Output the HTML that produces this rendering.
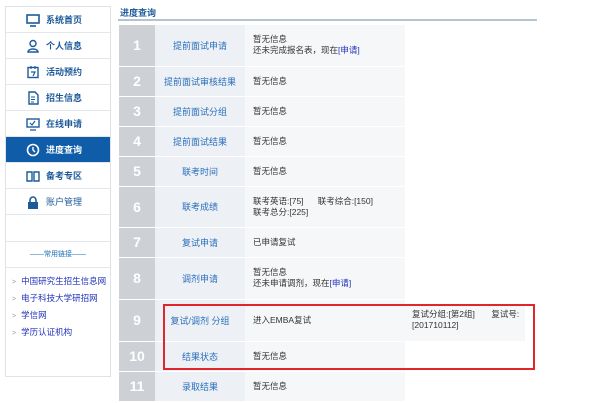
<!DOCTYPE html>
<html><head><meta charset="utf-8"><style>
*{margin:0;padding:0;box-sizing:border-box}
body{width:600px;height:403px;background:#fff;font-family:"Liberation Sans","Noto Sans CJK SC",sans-serif;font-size:9px;color:#333;position:relative;overflow:hidden}
.side{position:absolute;left:5px;top:6px;width:106px;height:371px;border:1px solid #dfe3e8;background:#fff}
.it{height:26px;border-bottom:1px solid #e3e6ea;display:flex;align-items:center;padding-left:20px;color:#1d5a9a;font-weight:bold;font-size:9px}
.it svg{width:14px;height:14px;margin-right:6px;flex:none}
.it.act{background:#0f5ca8;color:#fff}
.blank{height:27px;border-bottom:1px solid #e3e6ea}
.hd{height:26px;border-bottom:1px solid #e3e6ea;color:#1a6fb5;font-size:7px;text-align:center;line-height:26px}
.links{padding-top:5px}
.links div{height:17px;line-height:17px;font-size:8.5px;color:#2233bb;padding-left:6px}
.links span{color:#999;margin-right:5px;font-size:7px}
.title{position:absolute;left:120px;top:6px;font-size:9px;font-weight:bold;color:#1d5a9a}
.line{position:absolute;left:118px;top:19px;width:419px;height:2px;background:#b5c3d1}
table{position:absolute;left:119px;top:25px;border-collapse:collapse}
td{border-bottom:1px solid #fff;padding:0;vertical-align:middle}
td.n{width:36px;background:#cdd1d6;color:#fff;font-weight:bold;font-size:14px;text-align:center}
td.l{width:90px;background:#edf1f6;color:#2a6ebb;text-align:center;font-size:9px}
td.c{width:160px;background:#f6f7f9;padding-left:8px;font-size:8.5px;line-height:11px}
a{color:#2233bb;text-decoration:none}
.red{position:absolute;left:163px;top:304px;width:372px;height:66px;border:2px solid #e0262c}
.ext{position:absolute;left:405px;top:305px;width:120px;height:36px;background:#f6f7f9;font-size:8.5px;line-height:11px;padding:4px 0 0 7px}
</style></head><body>
<div class="side">
<div class="it"><svg viewBox="0 0 14 14"><rect x="1" y="2" width="12" height="8" fill="none" stroke="#1d5a9a" stroke-width="1.6"/><path d="M4 13h6" stroke="#1d5a9a" stroke-width="1.6"/></svg>系统首页</div>
<div class="it"><svg viewBox="0 0 14 14"><circle cx="7" cy="4.5" r="3" fill="none" stroke="#1d5a9a" stroke-width="1.4"/><path d="M2 13c0-4 10-4 10 0z" fill="none" stroke="#1d5a9a" stroke-width="1.4"/></svg>个人信息</div>
<div class="it"><svg viewBox="0 0 14 14"><rect x="2" y="2.5" width="10" height="10" fill="none" stroke="#1d5a9a" stroke-width="1.4"/><path d="M5 1v3M9 1v3M5 7h4l-2 4" stroke="#1d5a9a" stroke-width="1.2" fill="none"/></svg>活动预约</div>
<div class="it"><svg viewBox="0 0 14 14"><path d="M3 1h6l3 3v9H3z" fill="none" stroke="#1d5a9a" stroke-width="1.4"/><path d="M5 6h4M5 8.5h4M5 11h3" stroke="#1d5a9a" stroke-width="1"/></svg>招生信息</div>
<div class="it"><svg viewBox="0 0 14 14"><rect x="1" y="2" width="12" height="8" fill="none" stroke="#1d5a9a" stroke-width="1.4"/><path d="M4 6l2 2 3-4M4 13h6" stroke="#1d5a9a" stroke-width="1.2" fill="none"/></svg>在线申请</div>
<div class="it act"><svg viewBox="0 0 14 14"><circle cx="7" cy="7" r="5.5" fill="none" stroke="#fff" stroke-width="1.6"/><path d="M7 4v3l2 2" stroke="#fff" stroke-width="1.4" fill="none"/></svg>进度查询</div>
<div class="it"><svg viewBox="0 0 14 14"><path d="M1 3h5v9H1zM8 3h5v9H8z" fill="none" stroke="#1d5a9a" stroke-width="1.4"/></svg>备考专区</div>
<div class="it" style="font-weight:normal"><svg viewBox="0 0 14 14"><path d="M4 7V5a3 3 0 016 0v2" fill="none" stroke="#1d5a9a" stroke-width="1.6"/><rect x="2" y="7" width="10" height="7" fill="#1d5a9a"/></svg>账户管理</div>
<div class="blank"></div>
<div class="hd">——常用链接——</div>
<div class="links">
<div><span>&gt;</span>中国研究生招生信息网</div>
<div><span>&gt;</span>电子科技大学研招网</div>
<div><span>&gt;</span>学信网</div>
<div><span>&gt;</span>学历认证机构</div>
</div>
</div>
<div class="title">进度查询</div>
<div class="line"></div>
<table>
<tr style="height:41px"><td class="n">1</td><td class="l">提前面试申请</td><td class="c">暂无信息<br>还未完成报名表，现在<a>[申请]</a></td></tr>
<tr style="height:30px"><td class="n">2</td><td class="l">提前面试审核结果</td><td class="c">暂无信息</td></tr>
<tr style="height:30px"><td class="n">3</td><td class="l">提前面试分组</td><td class="c">暂无信息</td></tr>
<tr style="height:30px"><td class="n">4</td><td class="l">提前面试结果</td><td class="c">暂无信息</td></tr>
<tr style="height:30px"><td class="n">5</td><td class="l">联考时间</td><td class="c">暂无信息</td></tr>
<tr style="height:41px"><td class="n">6</td><td class="l">联考成绩</td><td class="c">联考英语:[75]&nbsp;&nbsp;&nbsp;&nbsp;&nbsp;&nbsp;联考综合:[150]<br>联考总分:[225]</td></tr>
<tr style="height:30px"><td class="n">7</td><td class="l">复试申请</td><td class="c">已申请复试</td></tr>
<tr style="height:42px"><td class="n">8</td><td class="l">调剂申请</td><td class="c">暂无信息<br>还未申请调剂，现在<a>[申请]</a></td></tr>
<tr style="height:42px"><td class="n">9</td><td class="l">复试/调剂 分组</td><td class="c">进入EMBA复试</td></tr>
<tr style="height:30px"><td class="n">10</td><td class="l">结果状态</td><td class="c">暂无信息</td></tr>
<tr style="height:30px"><td class="n">11</td><td class="l">录取结果</td><td class="c">暂无信息</td></tr>
</table>
<div class="ext">复试分组:[第2组]&nbsp;&nbsp;&nbsp;&nbsp;&nbsp;&nbsp;&nbsp;复试号:<br>[201710112]</div>
<div class="red"></div>
</body></html>
